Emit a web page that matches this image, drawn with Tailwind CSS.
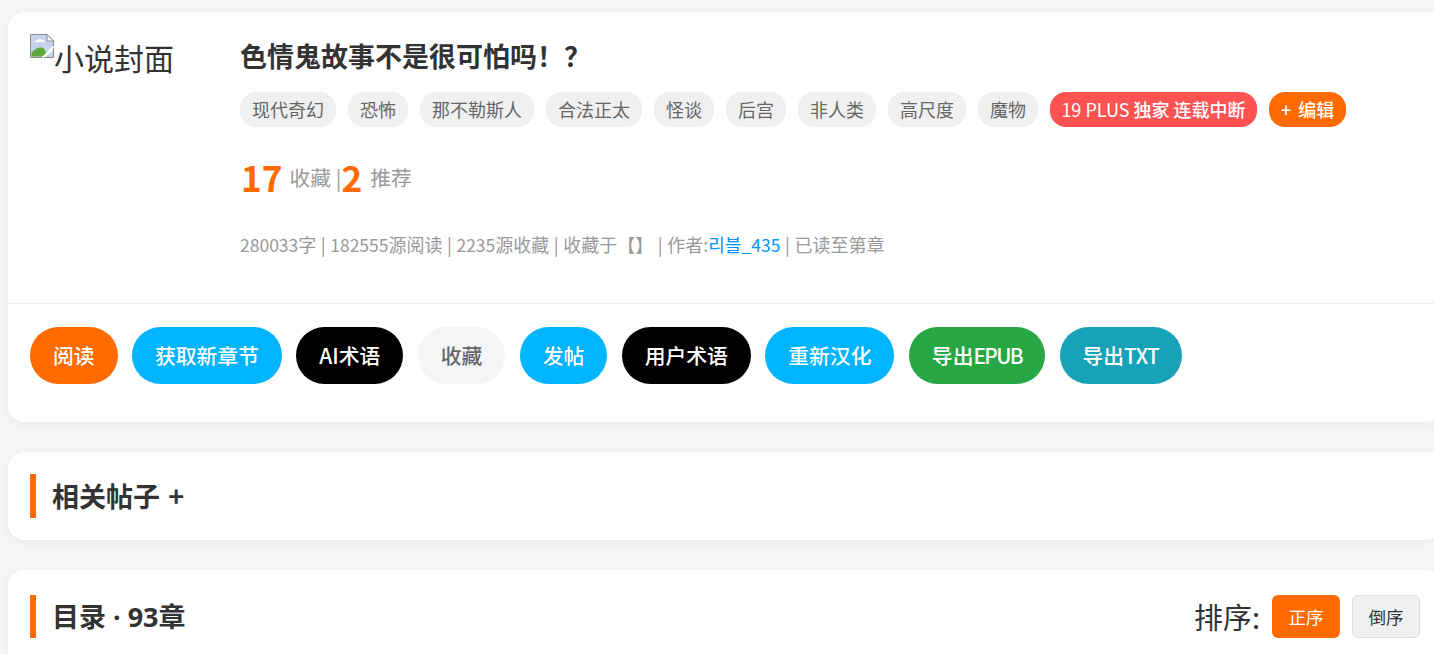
<!DOCTYPE html>
<html lang="zh">
<head>
<meta charset="utf-8">
<script src="https://cdn.jsdelivr.net/npm/@tailwindcss/browser@4"></script>
</head>
<body class="bg-[#f5f5f5] h-[654px] overflow-hidden font-['Noto_Sans_CJK_SC','Noto_Sans',sans-serif] text-[#333]">
<div class="w-[1434px] pl-2 pt-3 flex flex-col gap-[30px]">
  <section class="w-[1434px] h-[410px] shrink-0 bg-white rounded-2xl shadow-[0_2px_10px_rgba(0,0,0,0.05)]">
    <div class="h-[291px] border-b border-[#eee] box-content flex">
      <div class="w-[232px] pl-[22px] pt-[22px] shrink-0 flex items-start">
        <svg class="w-6 h-6 shrink-0" viewBox="0 0 24 24">
          <path d="M0.5 0.5H17L23.5 7V23.5H0.5Z" fill="#c4d4ea" stroke="#8c8c8c"/>
          <path d="M17 0.5V7H23.5Z" fill="#fff" stroke="#8c8c8c"/>
          <path d="M5 8q0-2 3-2 2-2 4 0 2 0 3 2Z" fill="#fff"/>
          <path d="M1.5 22.5V19q6-7 12-5l5 8.500Z" fill="#5fa83c"/>
          <path d="M13 24 24 13" stroke="#fff" stroke-width="3"/>
          <path d="M23.500 14V23.500H14" fill="none" stroke="#8c8c8c"/>
        </svg>
        <span class="text-[30px] leading-[38px] text-[#333] mt-[4px]">小说封面</span>
      </div>
      <div class="pt-[24px]">
        <h1 class="text-[27px] leading-[40px] font-bold text-[#333]">色情鬼故事不是很可怕吗！？</h1>
        <div class="flex gap-3 mt-[16px] text-[18px] leading-[34px] h-[35px]">
          <span class="px-3 rounded-2xl bg-[#f0f0f0] text-[#666]">现代奇幻</span>
          <span class="px-3 rounded-2xl bg-[#f0f0f0] text-[#666]">恐怖</span>
          <span class="px-3 rounded-2xl bg-[#f0f0f0] text-[#666]">那不勒斯人</span>
          <span class="px-3 rounded-2xl bg-[#f0f0f0] text-[#666]">合法正太</span>
          <span class="px-3 rounded-2xl bg-[#f0f0f0] text-[#666]">怪谈</span>
          <span class="px-3 rounded-2xl bg-[#f0f0f0] text-[#666]">后宫</span>
          <span class="px-3 rounded-2xl bg-[#f0f0f0] text-[#666]">非人类</span>
          <span class="px-3 rounded-2xl bg-[#f0f0f0] text-[#666]">高尺度</span>
          <span class="px-3 rounded-2xl bg-[#f0f0f0] text-[#666]">魔物</span>
          <span class="w-[207px] text-center rounded-2xl bg-[#ff5252] text-white whitespace-nowrap font-medium"><span class="font-normal">19 PLUS</span> 独家 连载中断</span>
          <span class="px-3 rounded-2xl bg-[#ff6b00] text-white font-medium [word-spacing:3px]">+ 编辑</span>
        </div>
        <div class="flex items-center mt-[25px] h-[50px] text-[20.8px] text-[#999]">
          <span class="text-[35.2px] leading-[50px] font-bold text-[#ff6b00] ml-px">17</span>
          <span class="ml-[7px] mt-px">收藏 |</span>
          <span class="text-[35.2px] leading-[50px] font-bold text-[#ff6b00]">2</span>
          <span class="ml-[8px] mt-px">推荐</span>
        </div>
        <p class="mt-[30px] text-[18px] leading-[24px] text-[#999] [word-spacing:0.5px]"><span class="text-[17.5px]">280033</span>字 | <span class="text-[17.5px]">182555</span>源阅读 | <span class="text-[17.5px]">2235</span>源收藏 | 收藏于【】 | 作者:<span class="text-[#0095ff]">리블_<span class="text-[17.5px]">435</span></span> | 已读至第章</p>
      </div>
    </div>
    <div class="flex gap-[14.4px] pl-[22px] pt-[23px] text-[20.8px] leading-[57px] font-medium">
      <span class="px-[23px] rounded-[30px] bg-[#ff6b00] text-white">阅读</span>
      <span class="px-[23px] rounded-[30px] bg-[#00b4ff] text-white">获取新章节</span>
      <span class="px-[23px] rounded-[30px] bg-black text-white">AI术语</span>
      <span class="px-[23px] rounded-[30px] bg-[#f5f5f5] text-[#666]">收藏</span>
      <span class="px-[23px] rounded-[30px] bg-[#00b4ff] text-white">发帖</span>
      <span class="px-[23px] rounded-[30px] bg-black text-white">用户术语</span>
      <span class="px-[23px] rounded-[30px] bg-[#00b4ff] text-white">重新汉化</span>
      <span class="px-[23px] rounded-[30px] bg-[#28a745] text-white">导出<span class="tracking-[-1.6px]">EPUB</span></span>
      <span class="px-[23px] rounded-[30px] bg-[#17a2b8] text-white">导出<span class="tracking-[-0.6px]">TXT</span></span>
    </div>
  </section>
  <section class="w-[1434px] h-[88px] shrink-0 bg-white rounded-2xl shadow-[0_2px_10px_rgba(0,0,0,0.05)] pl-[22px] pt-[22px]">
    <h2 class="border-l-[6px] border-[#ff6b00] pl-[16px] h-[44px] text-[27px] leading-[44px] font-bold text-[#333] [word-spacing:2px]">相关帖子 +</h2>
  </section>
  <section class="w-[1434px] h-[120px] shrink-0 bg-white rounded-2xl shadow-[0_2px_10px_rgba(0,0,0,0.05)] px-[22px] pt-[25px]">
    <div class="flex justify-between items-center h-[43px]">
      <h2 class="border-l-[6px] border-[#ff6b00] pl-[16px] h-[43px] text-[27px] leading-[43px] font-bold text-[#333] font-['Noto_Sans','Noto_Sans_CJK_SC',sans-serif]">目录 · 93章</h2>
      <div class="flex items-center">
        <span class="text-[29px] mr-3">排序:</span>
        <span class="w-[68px] h-[43px] leading-[43px] text-center rounded-md bg-[#ff6b00] text-white text-[17.6px]">正序</span>
        <span class="w-[68px] h-[43px] leading-[41px] text-center rounded-md bg-[#f0f0f0] border border-[#ddd] text-[#333] text-[17.6px] ml-3">倒序</span>
      </div>
    </div>
  </section>
</div>
</body>
</html>
